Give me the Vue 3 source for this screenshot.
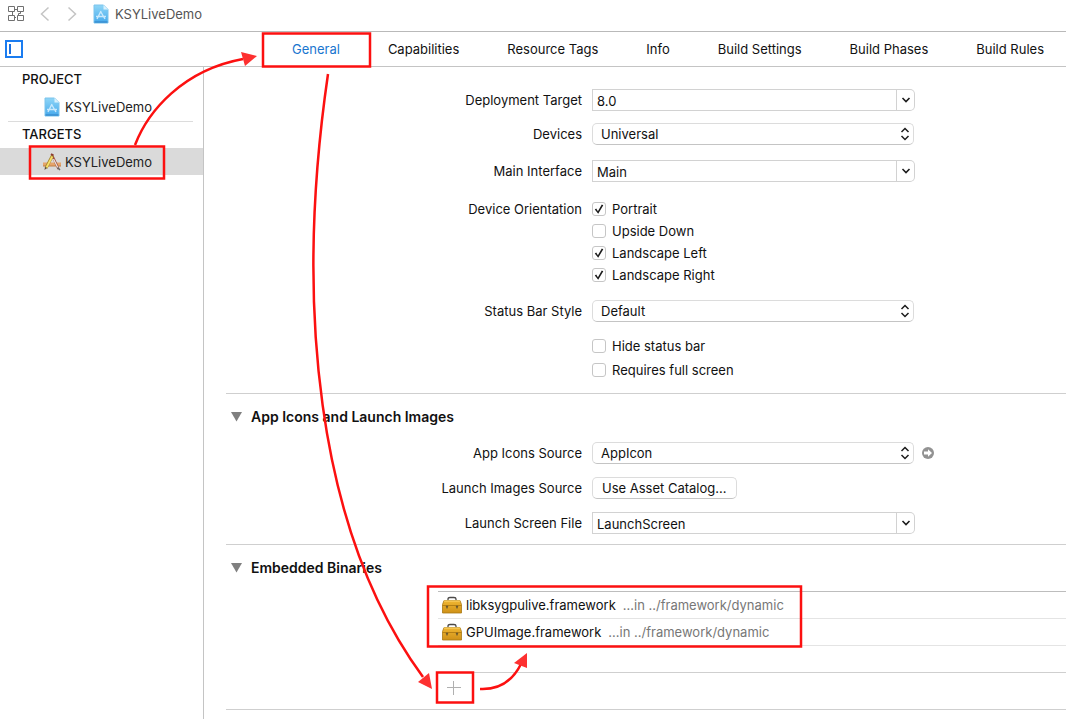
<script setup>
import { ref } from 'vue'

const tabs = ['General', 'Capabilities', 'Resource Tags', 'Info', 'Build Settings', 'Build Phases', 'Build Rules']
const activeTab = ref('General')

const deploymentTarget = ref('8.0')
const mainInterface = ref('Main')
const launchScreen = ref('LaunchScreen')

const orientations = ref([
  { id: 'portrait', label: 'Portrait', on: true },
  { id: 'upside-down', label: 'Upside Down', on: false },
  { id: 'landscape-left', label: 'Landscape Left', on: true },
  { id: 'landscape-right', label: 'Landscape Right', on: true },
])
const statusOptions = ref([
  { id: 'hide-status', label: 'Hide status bar', on: false },
  { id: 'full-screen', label: 'Requires full screen', on: false },
])
const binaries = [
  { name: 'libksygpulive.framework', path: '…in ../framework/dynamic' },
  { name: 'GPUImage.framework', path: '…in ../framework/dynamic' },
]
</script>

<template>
  <div class="window">
    <svg class="defs" width="0" height="0" aria-hidden="true">
      <defs>
        <linearGradient id="doc-fill" x1="0" y1="0" x2="0" y2="1">
          <stop offset="0" stop-color="#8fd6f7" />
          <stop offset="1" stop-color="#45a9ec" />
        </linearGradient>
        <linearGradient id="box-fill" x1="0" y1="0" x2="0" y2="1">
          <stop offset="0" stop-color="#f0b632" />
          <stop offset="1" stop-color="#cf9118" />
        </linearGradient>
        <symbol id="doc" viewBox="0 0 16 20">
          <path d="M1 1h9.500l4.500 4.500V19H1z" fill="url(#doc-fill)" stroke="#7cc4ec" />
          <path d="M10.500 1v4.500H15z" fill="#d9f1fd" />
          <path d="M8 7l-4 8M7.600 7.500L12 15M3 12.500h10" fill="none" stroke="#c9e9fc" stroke-width="1.400" />
          <path d="M1.500 18h13" stroke="#3a8fd0" stroke-width="1.500" />
        </symbol>
        <symbol id="caret" viewBox="0 0 10 6">
          <path d="M1.500 1L5 4.500 8.500 1" fill="none" stroke="#1c1c1c" stroke-width="1.600" />
        </symbol>
        <symbol id="updown" viewBox="0 0 10 14">
          <path d="M1.500 5L5 1.500 8.500 5M1.500 9L5 12.500 8.500 9" fill="none" stroke="#1c1c1c" stroke-width="1.500" />
        </symbol>
      </defs>
    </svg>

    <header class="jumpbar">
      <button class="icon-button related" aria-label="Related items">
        <svg width="18" height="18" viewBox="0 0 18 18" fill="none" stroke="#707070">
          <path d="M.5 1.500h6v5h-6zM9.500 1.500h6v5h-6zM.5 10.500h6v5h-6zM9.500 10.500h6v5h-6z" />
          <path d="M6.500 4.500h3M4.500 6.500v4M12.500 6.500v2h-2v2M6.500 12.500h1.500" />
        </svg>
      </button>
      <button class="icon-button back" aria-label="Go back">
        <svg width="10" height="16" viewBox="0 0 10 16"><path d="M8.500 1.500L1.500 8l7 6.500" fill="none" stroke="#c4c4c4" stroke-width="1.500" /></svg>
      </button>
      <button class="icon-button forward" aria-label="Go forward">
        <svg width="10" height="16" viewBox="0 0 10 16"><path d="M1.500 1.500l7 6.500-7 6.500" fill="none" stroke="#c4c4c4" stroke-width="1.500" /></svg>
      </button>
      <svg class="doc" width="16" height="20"><use href="#doc" /></svg>
      <span class="crumb">KSYLiveDemo</span>
    </header>

    <div class="tabbar">
      <button class="icon-button" aria-label="Show project and targets list">
        <svg width="18" height="18" viewBox="0 0 18 18">
          <rect x="1" y="1" width="16" height="16" fill="#fff" stroke="#1a7cf0" stroke-width="2" />
          <path d="M5 4v10" stroke="#1a6fe0" stroke-width="2" />
        </svg>
      </button>
      <nav class="tabs">
        <button
          v-for="tab in tabs"
          :key="tab"
          class="tab"
          :class="{ active: tab === activeTab }"
          @click="activeTab = tab"
        >{{ tab }}</button>
      </nav>
    </div>

    <div class="body">
      <aside class="sidebar">
        <h2 class="group">PROJECT</h2>
        <a class="item" href="#project">
          <svg width="18" height="20"><use href="#doc" /></svg>
          <span>KSYLiveDemo</span>
        </a>
        <hr class="divider">
        <h2 class="group">TARGETS</h2>
        <a class="item selected" href="#target">
          <svg width="18" height="18" viewBox="0 0 18 18">
            <path d="M0 9.500h18v3.500H0z" fill="#e5a56c" />
            <path d="M0 13h18" stroke="#c07c44" />
            <path d="M9.500 3L15.500 16" stroke="#9a4a3c" stroke-width="2.200" />
            <path d="M10.500 6l4.500 9" stroke="#ece6e2" stroke-width="1.200" />
            <path d="M9.500 2.500L3 15" stroke="#a5862c" stroke-width="3" />
            <path d="M9.300 3.500L3.500 14.500" stroke="#f7e06a" stroke-width="1.800" />
            <path d="M8 1l2.500 1.500" stroke="#8c3b2e" stroke-width="2" />
            <path d="M1.500 17l.5-3 2 1z" fill="#5a4a38" />
            <path d="M14.500 14.500l2.500 2.500" stroke="#666" stroke-width="1.500" />
          </svg>
          <span>KSYLiveDemo</span>
        </a>
      </aside>

      <main class="editor">
        <section class="form deployment">
          <label class="label" for="target">Deployment Target</label>
          <div class="combo">
            <input id="target" v-model="deploymentTarget" type="text">
            <button aria-label="Deployment target choices"><svg width="10" height="6"><use href="#caret" /></svg></button>
          </div>

          <label class="label row-devices" for="devices">Devices</label>
          <div class="popup row-devices">
            <select id="devices"><option>Universal</option><option>iPhone</option><option>iPad</option></select>
            <svg width="10" height="14"><use href="#updown" /></svg>
          </div>

          <label class="label row-main" for="interface">Main Interface</label>
          <div class="combo row-main">
            <input id="interface" v-model="mainInterface" type="text">
            <button aria-label="Main interface choices"><svg width="10" height="6"><use href="#caret" /></svg></button>
          </div>

          <span id="orientation" class="label row-orientation">Device Orientation</span>
          <div class="checks row-orientation" role="group" aria-labelledby="orientation">
            <label v-for="o in orientations" :key="o.id" class="check" :for="o.id">
              <input :id="o.id" v-model="o.on" type="checkbox">
              <span>{{ o.label }}</span>
            </label>
          </div>

          <label class="label row-main" for="status">Status Bar Style</label>
          <div class="popup row-main">
            <select id="status"><option>Default</option><option>Light</option></select>
            <svg width="10" height="14"><use href="#updown" /></svg>
          </div>

          <div class="checks loose row-status">
            <label v-for="o in statusOptions" :key="o.id" class="check" :for="o.id">
              <input :id="o.id" v-model="o.on" type="checkbox">
              <span>{{ o.label }}</span>
            </label>
          </div>
        </section>

        <section class="section">
          <h3 class="title">
            <svg width="12" height="10" viewBox="0 0 12 10"><path d="M0 0h11L5.500 9.500z" fill="#808080" /></svg>
            App Icons and Launch Images
          </h3>
          <div class="form icons">
            <label class="label" for="icons">App Icons Source</label>
            <div class="with-link">
              <div class="popup">
                <select id="icons"><option>AppIcon</option></select>
                <svg width="10" height="14"><use href="#updown" /></svg>
              </div>
              <button class="icon-button go" aria-label="Show app icons source">
                <svg width="12" height="12" viewBox="0 0 12 12">
                  <circle cx="6" cy="6" r="6" fill="#929292" />
                  <path d="M2 4.500H6V2.200L10 6 6 9.800V7.500H2z" fill="#fff" />
                </svg>
              </button>
            </div>

            <span id="launch-images" class="label">Launch Images Source</span>
            <div><button class="push" aria-describedby="launch-images">Use Asset Catalog...</button></div>

            <label class="label" for="launch-screen">Launch Screen File</label>
            <div class="combo">
              <input id="launch-screen" v-model="launchScreen" type="text">
              <button aria-label="Launch screen choices"><svg width="10" height="6"><use href="#caret" /></svg></button>
            </div>
          </div>
        </section>

        <section class="section">
          <h3 class="title">
            <svg width="12" height="10" viewBox="0 0 12 10"><path d="M0 0h11L5.500 9.500z" fill="#808080" /></svg>
            Embedded Binaries
          </h3>
          <ul class="binaries">
            <li v-for="b in binaries" :key="b.name">
              <svg width="20" height="18" viewBox="0 0 20 18">
                <path d="M6 4.500V3Q6 1.500 8 1.500h4q2 0 2 1.500v1.500" fill="none" stroke="#4c4a48" stroke-width="1.300" />
                <path d="M2 4.500h16l1.500 4v8.500h-19V8.500z" fill="url(#box-fill)" stroke="#a87914" stroke-width=".800" />
                <path d="M.5 9.500h19" stroke="#b57f14" />
                <path d="M2 5h16" stroke="#ffd873" />
                <path d="M4 10h2l-1 2.500zM14 10h2l-1 2.500z" fill="#5f5030" stroke="#5f5030" stroke-width=".500" />
              </svg>
              <span class="name">{{ b.name }}</span>
              <span class="path">{{ b.path }}</span>
            </li>
          </ul>
          <div class="footer">
            <button class="icon-button add" aria-label="Add embedded binary">
              <svg width="14" height="14" viewBox="0 0 14 14"><path d="M6.500 0v14M0 6.500h14" stroke="#b0b0b0" /></svg>
            </button>
          </div>
        </section>
        <div class="end"></div>
      </main>
    </div>

    <svg class="annotations" width="1066" height="719" viewBox="0 0 1066 719" aria-hidden="true">
      <g fill="none" stroke="#fc1010" stroke-width="2.500">
        <rect x="263" y="33.500" width="107" height="33" />
        <rect x="30" y="146.500" width="134" height="32" />
        <rect x="428" y="586.500" width="373" height="60" />
        <rect x="437" y="672.500" width="36" height="30" />
        <path d="M135 145C148 111 183 70 243 59" />
        <path d="M328 74C295 300 315 530 423 677" />
        <path d="M480 689C500 690 513 680 521 664" />
      </g>
      <g fill="#fd3030">
        <path d="M257 56L241 52 245 66z" />
        <path d="M432 689L418 682 429 673z" />
        <path d="M527 653L514 663 527 668z" />
      </g>
    </svg>
  </div>
</template>

<style>
body {
  margin: 0;
  background: #fff;
}
</style>

<style scoped>
.window {
  position: relative;
  display: flex;
  flex-direction: column;
  min-height: 100vh;
  overflow: hidden;
  background: #fff;
  color: #111;
  font: 13px/20px Inter, "Liberation Sans", sans-serif;
}
.window *,
.window {
  box-sizing: border-box;
}
button,
input,
select {
  margin: 0;
  padding: 0;
  font: inherit;
  color: inherit;
  background: none;
  border: 0;
  border-radius: 0;
}
svg {
  display: block;
  flex: none;
}
.defs {
  position: absolute;
}
.annotations {
  position: absolute;
  top: 0;
  left: 0;
  pointer-events: none;
}
.jumpbar {
  display: flex;
  align-items: center;
  height: 32px;
  padding: 0 8px 3px;
  border-bottom: 1px solid #b9b9b9;
}
.back {
  margin-left: 14px;
}
.forward {
  margin-left: 17px;
}
.doc {
  margin-left: 16px;
}
.crumb {
  margin-left: 6px;
  color: #555;
}
.tabbar {
  display: flex;
  align-items: center;
  height: 35px;
  padding: 0 22px 0 5px;
  border-bottom: 1px solid #c4c4c4;
}
.tabs {
  display: flex;
  flex: 1;
  justify-content: space-between;
  margin-left: 269px;
}
.tab.active {
  color: #1a76cf;
}
.body {
  display: flex;
  flex: 1;
}
.sidebar {
  width: 204px;
  flex: none;
  padding-top: 2px;
  border-right: 1px solid #c4c4c4;
}
.group {
  margin: 0;
  padding-left: 22px;
  font-size: 13px;
  font-weight: 500;
  line-height: 20px;
}
.item {
  display: flex;
  align-items: center;
  gap: 4px;
  height: 27px;
  margin-top: 4px;
  padding-left: 43px;
  color: #222;
  text-decoration: none;
}
.item.selected {
  background: #dadada;
}
.divider {
  height: 1px;
  margin: 1px 10px 2px 8px;
  border: 0;
  background: #dcdcdc;
}
.editor {
  flex: 1;
  min-width: 0;
}
.form {
  display: grid;
  grid-template-columns: 378px minmax(0, 323px);
  column-gap: 10px;
}
.deployment {
  padding-top: 22px;
  padding-bottom: 13px;
}
.label {
  line-height: 22px;
  text-align: right;
}
.row-devices {
  margin-top: 12px;
}
.row-main {
  margin-top: 15px;
}
.row-orientation {
  margin-top: 17px;
}
.label.row-orientation {
  line-height: 20px;
}
.row-status {
  grid-column: 2;
  margin-top: 14px;
}
.combo {
  display: flex;
  height: 22px;
}
.combo input {
  flex: 1;
  min-width: 0;
  padding: 2px 4px 0;
  border: 1px solid #d2d2d2;
}
.combo button {
  display: flex;
  align-items: center;
  justify-content: center;
  width: 18px;
  border: 1px solid #d2d2d2;
  border-left: 0;
  border-radius: 0 5px 5px 0;
}
.popup {
  position: relative;
  width: 322px;
  max-width: 100%;
  height: 22px;
}
.popup select {
  width: 100%;
  height: 22px;
  padding: 0 24px 0 8px;
  appearance: none;
  background: #fff;
  border: 1px solid #dcdcdc;
  border-bottom-color: #c4c4c4;
  border-radius: 5px;
}
.popup svg {
  position: absolute;
  top: 4px;
  right: 4px;
  pointer-events: none;
}
.checks {
  display: grid;
  gap: 2px;
}
.checks.loose {
  gap: 4px;
}
.check {
  display: flex;
  align-items: center;
  gap: 6px;
  height: 20px;
}
.check input {
  display: grid;
  place-items: center;
  width: 14px;
  height: 14px;
  appearance: none;
  background: #fff;
  border: 1px solid #c6c6c6;
  border-radius: 3px;
}
.check input:checked::after {
  content: "";
  width: 10px;
  height: 10px;
  background: #1c1c1c;
  clip-path: polygon(8% 55%, 22% 46%, 39% 72%, 78% 4%, 93% 12%, 42% 98%);
}
.section {
  margin-left: 22px;
  border-top: 1px solid #cfcfcf;
}
.title {
  display: flex;
  align-items: center;
  gap: 8px;
  margin: 0;
  padding: 13px 0 13px 5px;
  font-size: 14px;
  font-weight: 600;
  line-height: 20px;
}
.icons {
  grid-template-columns: 356px minmax(0, 323px);
  row-gap: 13px;
  padding: 2px 0 10px;
}
.with-link {
  display: flex;
  align-items: center;
  gap: 8px;
}
.with-link .popup {
  flex: none;
}
.push {
  height: 22px;
  padding: 0 9px;
  border: 1px solid #dcdcdc;
  border-bottom-color: #c4c4c4;
  border-radius: 5px;
}
.binaries {
  margin: 0 0 0 212px;
  padding: 0;
  list-style: none;
  border-top: 1px solid #bdbdbd;
}
.binaries li {
  display: flex;
  align-items: center;
  height: 27px;
  padding-left: 4px;
  border-bottom: 1px solid #e4e4e4;
}
.name {
  margin-left: 4px;
}
.path {
  margin-left: 7px;
  color: #777;
}
.footer {
  margin: 26px 0 0 212px;
  height: 37px;
  padding: 7px 0 0 9px;
  border-top: 1px solid #cfcfcf;
}
.end {
  margin-left: 22px;
  border-top: 1px solid #cfcfcf;
}
</style>
